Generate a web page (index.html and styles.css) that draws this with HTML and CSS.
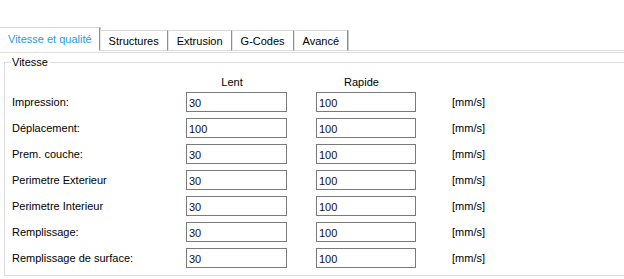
FILE: index.html
```html
<html>

<head>
    <title>Vitesse et qualité</title>
    <link rel="stylesheet" href="styles.css">
</head>

<body>
    <div class="tabs">
        <div class="tab active">Vitesse et qualité</div>
        <div class="tab">Structures</div>
        <div class="tab">Extrusion</div>
        <div class="tab">G-Codes</div>
        <div class="tab">Avancé</div>
    </div>

    <div class="panel">
        <fieldset class="group">
            <legend>Vitesse</legend>
            <div class="grid">
                <div></div>
                <div class="head">Lent</div>
                <div class="head">Rapide</div>
                <div></div>

                <div class="label">Impression:</div>
                <input class="box" value="30">
                <input class="box" value="100">
                <div class="unit">[mm/s]</div>

                <div class="label">Déplacement:</div>
                <input class="box" value="100">
                <input class="box" value="100">
                <div class="unit">[mm/s]</div>

                <div class="label">Prem. couche:</div>
                <input class="box" value="30">
                <input class="box" value="100">
                <div class="unit">[mm/s]</div>

                <div class="label">Perimetre Exterieur</div>
                <input class="box" value="30">
                <input class="box" value="100">
                <div class="unit">[mm/s]</div>

                <div class="label">Perimetre Interieur</div>
                <input class="box" value="30">
                <input class="box" value="100">
                <div class="unit">[mm/s]</div>

                <div class="label">Remplissage:</div>
                <input class="box" value="30">
                <input class="box" value="100">
                <div class="unit">[mm/s]</div>

                <div class="label">Remplissage de surface:</div>
                <input class="box" value="30">
                <input class="box" value="100">
                <div class="unit">[mm/s]</div>
            </div>
        </fieldset>
    </div>
</body>

</html>
```

FILE: styles.css
```css
* {
    box-sizing: border-box;
}

body {
    margin: 0px;
    background-color: white;
    font-family: "Liberation Sans", Arial, sans-serif;
    font-size: 11px;
    color: black;
    overflow: hidden;
    width: 624px;
    height: 279px;
}

.tabs {
    display: flex;
    align-items: flex-end;
    height: 51px;
    position: relative;
    z-index: 1;
}

.tab {
    height: 21px;
    line-height: 20px;
    padding: 0px 8px;
    background-color: white;
    border-top: 1px solid #d6d6d6;
    border-left: 1px solid #e6e6e6;
    border-right: 1px solid #8e8e8e;
    box-shadow: 1px 0px 0px #c9c9c9;
    border-bottom: 1px solid #dcdcdc;
}

.tab.active {
    height: 24px;
    line-height: 23px;
    padding: 0px 7px 0px 8px;
    border-left: none;
    border-bottom: 1px solid white;
    color: #1a9ee0;
}

.panel {
    border-top: 3px double #e0e0e0;
    margin-top: -1px;
    padding: 4px 0px 0px 4px;
}

.group {
    width: 660px;
    height: 219px;
    margin: 0px;
    padding: 0px;
    border: 1px solid #dcdcdc;
    border-right: none;
}

.group legend {
    margin-left: 6px;
    padding: 0px 2px 0px 1px;
    line-height: 10px;
}

.grid {
    display: grid;
    grid-template-columns: 145px 101px 100px auto;
    grid-template-rows: 15px;
    grid-auto-rows: 20px;
    column-gap: 29px;
    row-gap: 6px;
    padding: 4px 0px 0px 7px;
}

.head {
    text-align: center;
    line-height: 12px;
    padding: 5px 9px 0px 0px;
}

.label {
    line-height: 20px;
}

.unit {
    line-height: 20px;
    margin-left: 7px;
}

.box {
    height: 20px;
    width: 100%;
    margin: 0px;
    border: 1px solid #7a7a7a;
    padding: 1px 1px 0px 2px;
    font-family: "Liberation Sans", Arial, sans-serif;
    font-size: 11px;
    color: #111;
    background-color: white;
    outline: none;
}
```
